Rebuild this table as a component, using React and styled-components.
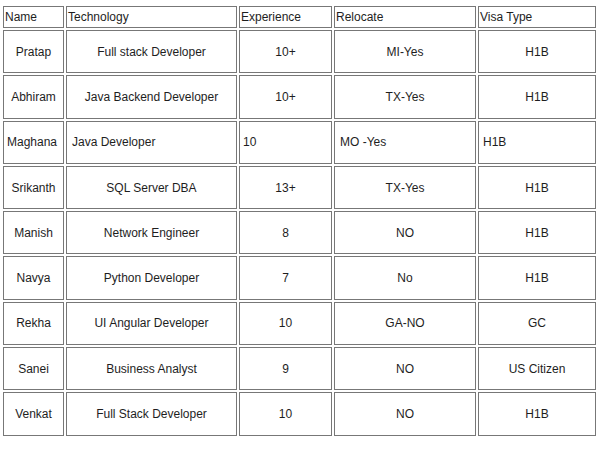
import React from 'react';
import styled, { createGlobalStyle } from 'styled-components';

const GlobalStyle = createGlobalStyle`
    body {
        margin: 0;
        background: #fff;
        font-family: "Liberation Sans", Arial, sans-serif;
    }
`;

const columns = [
    { key: 'name', title: 'Name', width: 61 },
    { key: 'tech', title: 'Technology', width: 171 },
    { key: 'exp', title: 'Experience', width: 93 },
    { key: 'relocate', title: 'Relocate', width: 142 },
    { key: 'visa', title: 'Visa Type', width: 118 },
];

const candidates = [
    { name: 'Pratap', tech: 'Full stack Developer', exp: '10+', relocate: 'MI-Yes', visa: 'H1B' },
    { name: 'Abhiram', tech: 'Java Backend Developer', exp: '10+', relocate: 'TX-Yes', visa: 'H1B' },
    { name: 'Maghana', tech: 'Java Developer', exp: '10', relocate: 'MO -Yes', visa: 'H1B', plain: true },
    { name: 'Srikanth', tech: 'SQL Server DBA', exp: '13+', relocate: 'TX-Yes', visa: 'H1B' },
    { name: 'Manish', tech: 'Network Engineer', exp: '8', relocate: 'NO', visa: 'H1B' },
    { name: 'Navya', tech: 'Python Developer', exp: '7', relocate: 'No', visa: 'H1B' },
    { name: 'Rekha', tech: 'UI Angular Developer', exp: '10', relocate: 'GA-NO', visa: 'GC' },
    { name: 'Sanei', tech: 'Business Analyst', exp: '9', relocate: 'NO', visa: 'US Citizen' },
    { name: 'Venkat', tech: 'Full Stack Developer', exp: '10', relocate: 'NO', visa: 'H1B' },
];

// left padding for the row that was pasted without centering
const plainIndent = { name: 3, tech: 5, exp: 3, relocate: 5, visa: 4 };

function App() {
    return (
        <React.Fragment>
            <GlobalStyle />
            <Page>
                <Table>
                    <colgroup>
                        {columns.map((col) => (
                            <col key={col.key} style={{ width: col.width }} />
                        ))}
                    </colgroup>
                    <thead>
                        <HeadRow>
                            {columns.map((col) => (
                                <HeadCell key={col.key}>{col.title}</HeadCell>
                            ))}
                        </HeadRow>
                    </thead>
                    <tbody>
                        {candidates.map((row) => (
                            <Row key={row.name}>
                                {columns.map((col) => (
                                    <Cell
                                        key={col.key}
                                        $plain={row.plain}
                                        $indent={row.plain ? plainIndent[col.key] : 1}
                                    >
                                        {row[col.key]}
                                    </Cell>
                                ))}
                            </Row>
                        ))}
                    </tbody>
                </Table>
            </Page>
        </React.Fragment>
    );
}

export default App;

const Page = styled.div`
    padding: 4px 0 0 1px;
`;

const Table = styled.table`
    width: 597px;
    table-layout: fixed;
    border-collapse: separate;
    border-spacing: 2px;
    border: 0;
    font-size: 12px;
    color: #1e1e1e;
`;

const HeadRow = styled.tr`
    height: 22px;
`;

const Row = styled.tr`
    height: 43.3px;
`;

const HeadCell = styled.td`
    border: 1px solid #777;
    padding: 1px;
    text-align: left;
    vertical-align: middle;
    white-space: nowrap;
`;

const Cell = styled.td`
    border: 1px solid #777;
    padding: 1px 1px 1px ${(props) => props.$indent}px;
    text-align: ${(props) => (props.$plain ? 'left' : 'center')};
    vertical-align: middle;
    white-space: nowrap;
`;
